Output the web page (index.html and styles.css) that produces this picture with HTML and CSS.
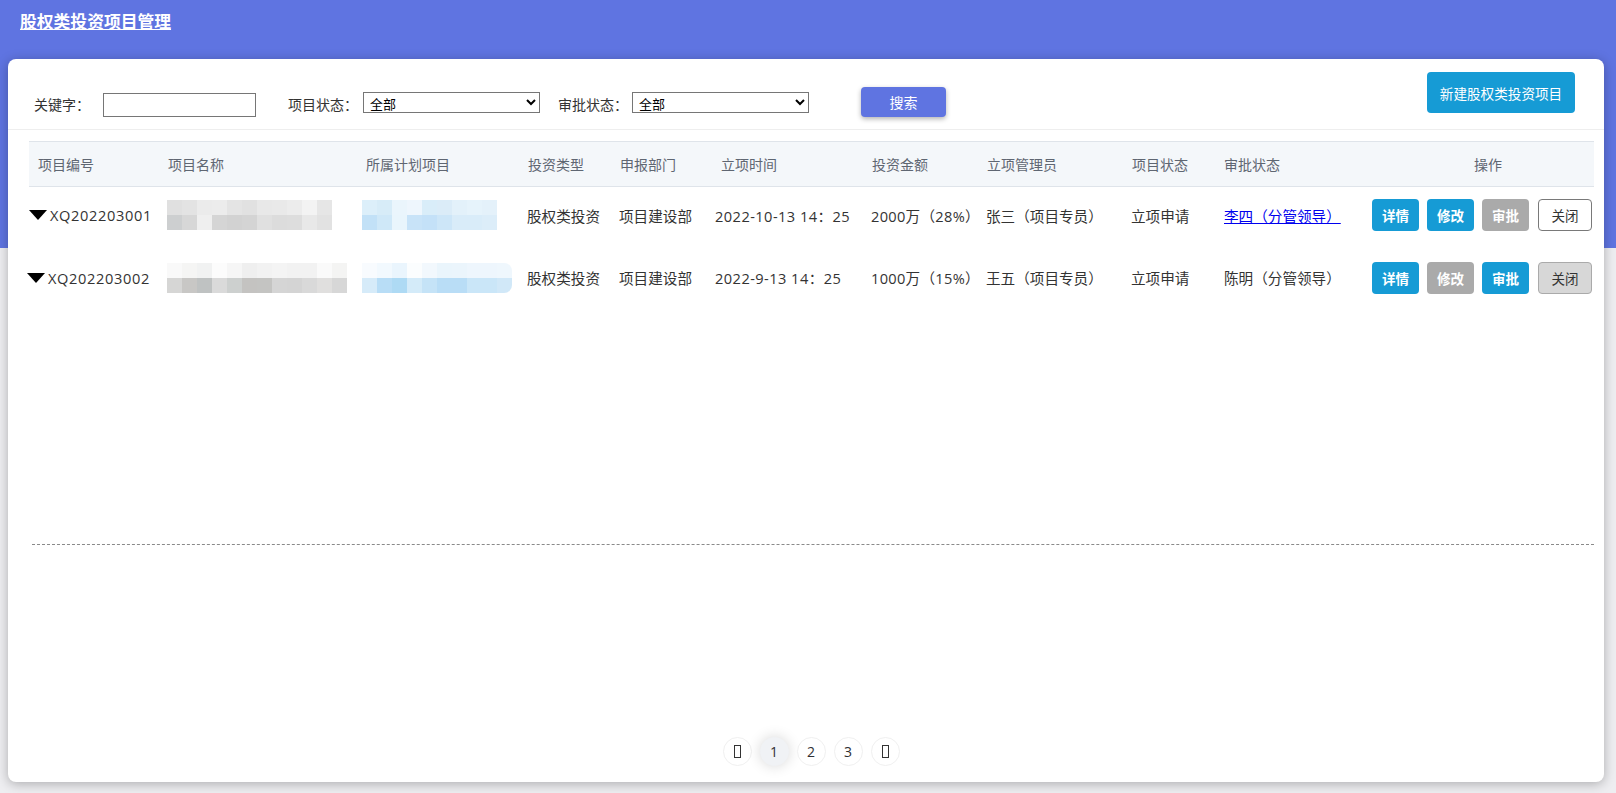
FILE: index.html
```html
<!DOCTYPE html>
<html lang="zh-CN">
<head>
<meta charset="utf-8">
<title>股权类投资项目管理</title>
<link rel="stylesheet" href="styles.css">
</head>
<body>
<header class="topbar">
  <a class="page-title">股权类投资项目管理</a>
</header>
<main class="card">
  <div class="filters">
    <label class="f-label f-kw">关键字：</label>
    <input class="f-input" type="text">
    <label class="f-label f-ps">项目状态：</label>
    <select class="f-select"><option>全部</option></select>
    <label class="f-label f-as">审批状态：</label>
    <select class="f-select"><option>全部</option></select>
    <button class="btn-search">搜索</button>
    <button class="btn-new">新建股权类投资项目</button>
  </div>

  <div class="table">
    <div class="thead">
      <div class="th">项目编号</div>
      <div class="th">项目名称</div>
      <div class="th">所属计划项目</div>
      <div class="th">投资类型</div>
      <div class="th">申报部门</div>
      <div class="th">立项时间</div>
      <div class="th">投资金额</div>
      <div class="th">立项管理员</div>
      <div class="th">项目状态</div>
      <div class="th">审批状态</div>
      <div class="th th-ops">操作</div>
    </div>
    <div class="tr tr-1">
      <div class="td td-id"><span class="caret"></span>XQ202203001</div>
      <div class="td"><span class="mosaic m-g1"></span></div>
      <div class="td td-plan"><span class="mosaic m-b1"></span></div>
      <div class="td">股权类投资</div>
      <div class="td">项目建设部</div>
      <div class="td td-time">2022-10-13 14：25</div>
      <div class="td td-amt">2000万（28%）</div>
      <div class="td">张三（项目专员）</div>
      <div class="td">立项申请</div>
      <div class="td td-appr"><a class="link" href="#">李四（分管领导）</a></div>
      <div class="td td-ops">
        <button class="op op-blue">详情</button>
        <button class="op op-blue">修改</button>
        <button class="op op-gray">审批</button>
        <button class="op op-close">关闭</button>
      </div>
    </div>
    <div class="tr tr-2">
      <div class="td td-id td-id2"><span class="caret"></span>XQ202203002</div>
      <div class="td"><span class="mosaic m-g2"></span></div>
      <div class="td td-plan"><span class="mosaic m-b2"></span></div>
      <div class="td">股权类投资</div>
      <div class="td">项目建设部</div>
      <div class="td td-time">2022-9-13 14：25</div>
      <div class="td td-amt">1000万（15%）</div>
      <div class="td">王五（项目专员）</div>
      <div class="td">立项申请</div>
      <div class="td td-appr">陈明（分管领导）</div>
      <div class="td td-ops">
        <button class="op op-blue">详情</button>
        <button class="op op-gray">修改</button>
        <button class="op op-blue">审批</button>
        <button class="op op-closed">关闭</button>
      </div>
    </div>
  </div>

  <div class="divider"></div>

  <nav class="pager">
    <span class="pg"><span class="tofu"></span></span>
    <span class="pg pg-active">1</span>
    <span class="pg">2</span>
    <span class="pg">3</span>
    <span class="pg"><span class="tofu"></span></span>
  </nav>
</main>
</body>
</html>
```

FILE: styles.css
```css
* { box-sizing: border-box; }

html, body {
  margin: 0;
  padding: 0;
}

body {
  width: 1616px;
  height: 793px;
  overflow: hidden;
  font-family: "Open Sans", "Noto Sans CJK SC", "Microsoft YaHei", sans-serif;
  color: #333;
  background: linear-gradient(#5f74e1 0, #5f74e1 248px, #eeeef1 248px, #eeeef1 100%);
}

.topbar {
  height: 59px;
  padding: 11px 0 0 20px;
}

.page-title {
  color: #fff;
  font-size: 16.8px;
  font-weight: bold;
  line-height: 20px;
  text-decoration: underline;
  font-family: "Noto Sans CJK SC", sans-serif;
}

.card {
  margin: 0 12px 0 8px;
  height: 723px;
  background: #fff;
  border-radius: 8px;
  box-shadow: 0 2px 12px rgba(0, 0, 0, 0.28);
  padding: 0 10px 0 21px;
  display: flex;
  flex-direction: column;
}

/* filters */
.filters {
  height: 71px;
  margin: 0 -10px 0 -21px;
  padding: 0 29px 0 26px;
  border-bottom: 1px solid #eeeeee;
  display: flex;
  align-items: flex-start;
  font-size: 14px;
}

.f-label {
  margin-top: 35px;
  line-height: 20px;
  color: #333;
  white-space: nowrap;
  font-family: "Noto Sans CJK SC", sans-serif;
}
.f-kw { width: 69px; }
.f-ps { width: 75px; margin-left: 32px; }
.f-as { width: 74px; margin-left: 18px; }

.f-input {
  margin-top: 34px;
  width: 153px;
  height: 24px;
  border: 1px solid #767676;
  border-radius: 0;
  padding: 0 4px;
  font-size: 13px;
  font-family: inherit;
}

.f-select {
  margin-top: 33px;
  width: 177px;
  height: 21px;
  font-size: 13px;
  font-family: "Noto Sans CJK SC", sans-serif;
  border: 1px solid #767676;
  border-radius: 0;
  background: #fff;
  color: #000;
  padding: 0 2px;
}

.btn-search {
  margin-top: 28px;
  margin-left: 52px;
  width: 85px;
  height: 30px;
  border: none;
  border-radius: 4px;
  background: #5f74e1;
  color: #fff;
  font-size: 14px;
  font-family: "Noto Sans CJK SC", sans-serif;
  box-shadow: 0 2px 5px rgba(0, 0, 0, 0.3);
}

.btn-new {
  margin-top: 13px;
  margin-left: auto;
  width: 148px;
  height: 41px;
  border: none;
  border-radius: 4px;
  background: #169bd5;
  color: #fff;
  font-size: 13.6px;
  font-family: "Noto Sans CJK SC", sans-serif;
  padding: 0;
}

/* table */
.table {
  margin-top: 11px;
  width: 1565px;
}

.thead, .tr {
  display: grid;
  grid-template-columns: 130px 198px 162px 92px 101px 151px 115px 145px 92px 145px 1fr;
  align-items: center;
}

.thead {
  height: 46px;
  background: #f4f7fa;
  border-top: 1px solid #dfe4ea;
  border-bottom: 1px solid #dfe4ea;
}

.th {
  padding-left: 9px;
  font-size: 14px;
  color: #5f6672;
  white-space: nowrap;
  font-family: "Noto Sans CJK SC", sans-serif;
}

.th-ops {
  text-align: center;
  padding-left: 22px;
}

.tr-1 { height: 56px; }
.tr-2 { height: 69px; }

.td {
  padding-left: 8px;
  font-size: 14.6px;
  color: #333;
  white-space: nowrap;
  display: flex;
  align-items: center;
}

.td-id {
  padding-left: 0;
  letter-spacing: 0.65px;
}
.td-id2 { margin-left: -2px; }

.caret {
  display: inline-block;
  width: 0;
  height: 0;
  border-left: 9.5px solid transparent;
  border-right: 9.5px solid transparent;
  border-top: 10px solid #000;
  margin-right: 3px;
}

.td-plan { padding-left: 5px; }
.td-time { padding-left: 3px; letter-spacing: 0.45px; }
.td-amt { letter-spacing: 0.3px; }
.td-appr { padding-left: 9px; }

.link {
  color: #0000ee;
  text-decoration: underline;
}

.td-ops {
  padding-left: 12px;
  gap: 8px;
}

.op {
  height: 32px;
  width: 47px;
  border-radius: 4px;
  border: none;
  font-size: 13.5px;
  font-family: "Noto Sans CJK SC", sans-serif;
  color: #fff;
  font-weight: bold;
  padding: 0;
}
.op-blue { background: #169bd5; }
.op-gray { background: #aaaaaa; }
.op-close {
  margin-left: 1px;
  width: 54px;
  background: #fff;
  border: 1px solid #797979;
  color: #333;
  font-weight: normal;
}
.op-closed {
  margin-left: 1px;
  width: 54px;
  background: #d7d7d7;
  border: 1px solid #aaaaaa;
  color: #333;
  font-weight: normal;
}

/* pixelated mosaics */
.mosaic {
  display: block;
  height: 30px;
  background-repeat: no-repeat;
  background-size: 100% 50%;
  background-position: top left, bottom left;
}

.m-g1 {
  width: 165px;
  background-image:
    linear-gradient(to right, #e0e0e0 0 15px, #e3e3e3 15px 30px, #ebebeb 30px 45px, #ececec 45px 60px, #e4e4e4 60px 75px, #e1e1e1 75px 90px, #e8e8e8 90px 105px, #e9e9e9 105px 120px, #ececec 120px 135px, #f3f3f3 135px 150px, #e6e6e6 150px 165px),
    linear-gradient(to right, #cdcfd0 0 15px, #d7d7d7 15px 30px, #efefef 30px 45px, #d5d5d5 45px 60px, #d2d2d2 60px 75px, #d4d4d4 75px 90px, #e0e0e0 90px 105px, #dcdcdc 105px 120px, #dddddd 120px 135px, #e8e8e8 135px 150px, #e2e2e2 150px 165px);
}

.m-b1 {
  width: 135px;
  background-image:
    linear-gradient(to right, #dceffa 0 15px, #d7ecf8 15px 30px, #eaf5fc 30px 45px, #eef6fd 45px 60px, #d9edf9 60px 75px, #dbecf8 75px 90px, #e3f1fa 90px 105px, #e6f3fb 105px 120px, #e4f1fa 120px 135px),
    linear-gradient(to right, #c2e1f7 0 15px, #cfe8f8 15px 30px, #e9f5fc 30px 45px, #c8e3f8 45px 60px, #c4e1f8 60px 75px, #cde6f8 75px 90px, #d9ecf9 90px 105px, #d9ecf9 105px 120px, #dcedf9 120px 135px);
}

.m-g2 {
  width: 180px;
  background-image:
    linear-gradient(to right, #f9f9f9 0 15px, #f5f5f4 15px 30px, #f1f2f2 30px 45px, #fcfcfc 45px 60px, #f6f6f6 60px 75px, #efefef 75px 90px, #f2f2f2 90px 105px, #f4f4f4 105px 120px, #f2f2f2 120px 135px, #f2f2f2 135px 150px, #fafafa 150px 165px, #f4f4f3 165px 180px),
    linear-gradient(to right, #d6d6d5 0 15px, #c8c7c5 15px 30px, #bfc2c2 30px 45px, #dadada 45px 60px, #cdd0cf 60px 75px, #c4c3c1 75px 90px, #c4c4c2 90px 105px, #d5d5d5 105px 120px, #d4d4d4 120px 135px, #d9d9d9 135px 150px, #e0dfde 150px 165px, #d7d7d7 165px 180px);
}

.m-b2 {
  width: 150px;
  border-radius: 0 8px 8px 0;
  background-image:
    linear-gradient(to right, #f8fbfe 0 15px, #f2f9fe 15px 30px, #eaf5fd 30px 45px, #fbfdfe 45px 60px, #f2f8fd 60px 75px, #eaf5fc 75px 90px, #ebf5fc 90px 105px, #eef6fd 105px 120px, #eef6fd 120px 135px, #eff7fd 135px 150px),
    linear-gradient(to right, #d6ebf9 0 15px, #b8ddf6 15px 30px, #aedaf4 30px 45px, #d4ebf9 45px 60px, #c5e3f7 60px 75px, #b9ddf6 75px 90px, #b9ddf6 90px 105px, #cae6f8 105px 120px, #cae6f8 120px 135px, #d1e8f8 135px 150px);
}

/* divider */
.divider {
  margin: 232px 0 0 3px;
  width: 1562px;
  border-top: 1px dashed #8a8a8a;
}

/* pager */
.pager {
  margin-top: auto;
  margin-bottom: 16px;
  margin-left: -21px;
  margin-right: -10px;
  display: flex;
  justify-content: center;
  gap: 8px;
  padding-left: 10px;
}

.pg {
  width: 29px;
  height: 29px;
  border-radius: 50%;
  border: 1px solid #f0f0f0;
  background: #fff;
  display: flex;
  align-items: center;
  justify-content: center;
  font-size: 14px;
  color: #303133;
}

.pg-active {
  background: #f0f2f5;
  border-color: #f0f2f5;
  box-shadow: 0 0 14px rgba(0, 0, 0, 0.16);
}

.tofu {
  display: block;
  width: 7px;
  height: 13px;
  border: 1.5px solid #333;
}
```
